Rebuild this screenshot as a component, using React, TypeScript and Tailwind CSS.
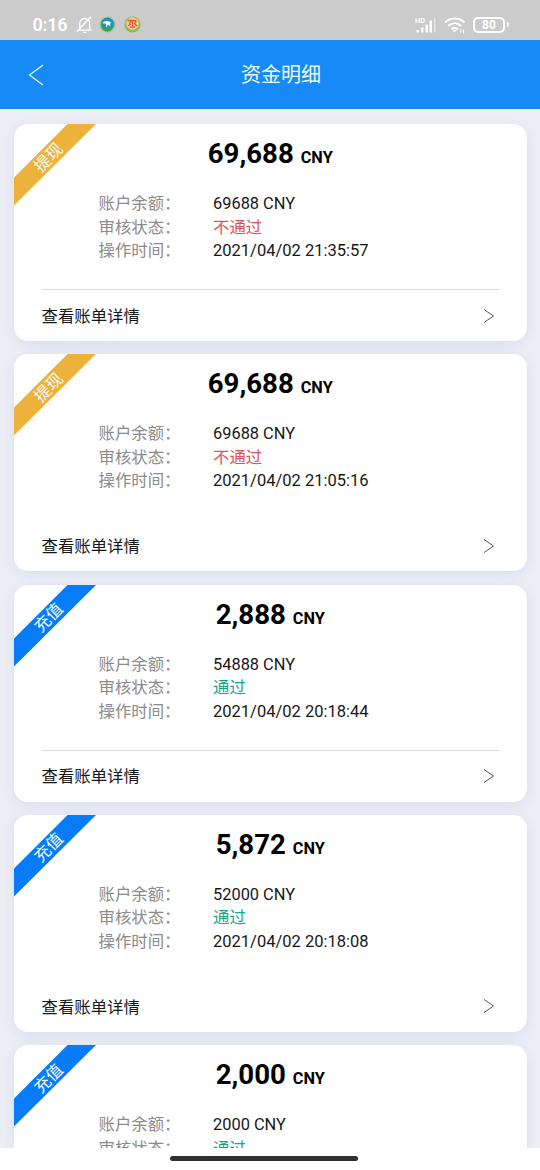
import React from "react";

type Kind = "withdraw" | "deposit";

interface Entry {
  kind: Kind;
  amount: string;
  balance: string;
  time?: string;
  divider: boolean;
}

const entries: Entry[] = [
  { kind: "withdraw", amount: "69,688", balance: "69688 CNY", time: "2021/04/02 21:35:57", divider: true },
  { kind: "withdraw", amount: "69,688", balance: "69688 CNY", time: "2021/04/02 21:05:16", divider: false },
  { kind: "deposit", amount: "2,888", balance: "54888 CNY", time: "2021/04/02 20:18:44", divider: true },
  { kind: "deposit", amount: "5,872", balance: "52000 CNY", time: "2021/04/02 20:18:08", divider: false },
  { kind: "deposit", amount: "2,000", balance: "2000 CNY", divider: false },
];

function StatusBar() {
  return (
    <header className="flex h-10 shrink-0 items-center bg-[#cbcbcb] pt-[9px] pr-[31px] pl-[32.5px] text-white">
      <span className="w-[43.5px] text-[18px] leading-5 font-semibold tracking-[-0.2px]">0:16</span>
      <svg className="h-[18px] w-[18px]" viewBox="0 0 18 18" fill="none" stroke="currentColor" strokeWidth="1.3">
        <path d="M1.500 14.200h14M3.700 14V7.800C3.700 4.500 6 2.500 8.700 2.500S13.700 4.500 13.700 7.800V14M7.300 16.300h3M15 .8 .8 15.500" />
      </svg>
      <svg className="ml-[5px] h-[17px] w-[17px]" viewBox="0 0 17 17">
        <circle cx="8.500" cy="8.500" r="8" fill="#9fce7c" />
        <circle cx="8.500" cy="8.200" r="6.600" fill="#238fc7" />
        <path d="M2 11c2-1 4 1 6 0s3 1 6 0c-1 3-3 4.500-5.500 4.500S3 14 2 11Z" fill="#35a554" />
        <path d="M3.500 7.500c2-3.500 7-3 9-.5l-1.500.5.500 3-2.500-2-2 3 .2-4Z" fill="#fff" />
      </svg>
      <svg className="ml-2 h-[17px] w-[17px]" viewBox="0 0 17 17">
        <circle cx="8.500" cy="8.500" r="8" fill="#8cbd52" />
        <circle cx="8.500" cy="7.500" r="6.200" fill="#f2cf98" />
        <path d="M3.500 4.500h9M5 7.500l2-2M11 4l1 3M4 10l3-2M8.500 5v5M10 7l3 3M6 11h5" stroke="#df5b40" strokeWidth="1.400" fill="none" />
      </svg>
      <svg className="ml-auto h-[18px] w-[22px]" viewBox="0 0 22 18">
        <text x="0" y="6.500" fontSize="7.500" fontWeight="700" fill="#fff" fontFamily="Roboto, sans-serif">HD</text>
        <path d="M1.500 16.500v-2.500h2.500v2.500zM6 16.500v-5h2.500v5zM10.500 16.500V8.500H13v8zM14.500 16.500V4.500h2.500v12z" fill="#fff" />
        <path d="M19 16.500v-14h1.500v14z" fill="#fff" opacity="0.5" />
      </svg>
      <svg className="ml-[7px] h-[18px] w-[22px]" viewBox="0 0 22 18" fill="none" stroke="#fff" strokeWidth="2">
        <path d="M1 6.500c5.500-5.300 14-5.300 19.500 0M4.200 10c4-3.700 9-3.700 13 0M7.500 13.300c2-1.800 4.500-1.800 6.500 0" />
        <path d="M8.500 14 10.800 16.500l2.200-2.500Z" fill="#fff" stroke="none" />
        <path d="M16.800 17v-4M19.500 13.500v4" strokeWidth="1" />
      </svg>
      <div className="ml-[7px] flex items-center gap-[2px]">
        <div className="flex h-[16px] w-[32px] items-center justify-center rounded-[5px] border-2 border-white text-[12px] leading-none font-bold">80</div>
        <div className="h-[5px] w-[2px] rounded-r bg-white" />
      </div>
    </header>
  );
}

function Ribbon({ kind }: { kind: Kind }) {
  const withdraw = kind === "withdraw";
  return (
    <div className="absolute top-0 left-0 h-[82px] w-[82px]">
      <svg className="h-full w-full" viewBox="0 0 82 82">
        <path d="M53.500 0H82L0 81.500V53.500Z" fill={withdraw ? "#ecb23c" : "#087cf8"} />
      </svg>
      <span className="absolute top-[23.5px] left-[14.5px] w-10 -rotate-45 text-center text-[16.4px] leading-5 text-[#f4f8f4]">
        {withdraw ? "提现" : "充值"}
      </span>
    </div>
  );
}

function EntryCard({ entry }: { entry: Entry }) {
  const rejected = entry.kind === "withdraw";
  return (
    <article className="relative flex h-[217px] shrink-0 flex-col overflow-hidden rounded-[14px] bg-white shadow-[0_3px_14px_rgba(90,130,210,0.14)]">
      <Ribbon kind={entry.kind} />
      <h2 className="flex h-[68px] shrink-0 items-baseline justify-center gap-[7px] pt-[11px] text-black">
        <span className="text-[27.6px] leading-[38px] font-bold">{entry.amount}</span>
        <span className="text-[16.3px] font-bold">CNY</span>
      </h2>
      <dl className="grid grid-cols-[114.5px_1fr] pl-[84.5px] text-[16.4px] leading-[23.6px]">
        <dt className="h-[23.6px] text-[#8b8b8b]">账户余额：</dt>
        <dd className="h-[23.6px] text-[#171717]">{entry.balance}</dd>
        <dt className="h-[23.6px] text-[#8b8b8b]">审核状态：</dt>
        <dd className={rejected ? "h-[23.6px] text-[#e45158]" : "h-[23.6px] text-[#16a586]"}>
          {rejected ? "不通过" : "通过"}
        </dd>
        {entry.time && (
          <>
            <dt className="h-[23.6px] text-[#8b8b8b]">操作时间：</dt>
            <dd className="h-[23.6px] text-[16.5px] text-[#171717]">{entry.time}</dd>
          </>
        )}
      </dl>
      {entry.time && (
        <div
          className={
            entry.divider
              ? "mr-7 ml-[27.5px] mt-auto flex h-[52px] shrink-0 items-center justify-between border-t border-[#dcdcdc]"
              : "mr-7 ml-[27.5px] mt-auto flex h-[52px] shrink-0 items-center justify-between border-t border-transparent"
          }
        >
          <span className="pt-[3px] text-[16.4px] text-[#171717]">查看账单详情</span>
          <svg className="mr-1 h-4 w-3" viewBox="0 0 12 16" fill="none" stroke="#555" strokeWidth="1">
            <path d="m1 1.500 9.500 6.500L1 14.500" />
          </svg>
        </div>
      )}
    </article>
  );
}

export default function App() {
  return (
    <div className="flex h-[1170px] w-[540px] flex-col overflow-hidden bg-white font-['Roboto','Noto_Sans_CJK_SC',sans-serif]">
      <StatusBar />
      <nav className="grid h-[69px] shrink-0 grid-cols-[80px_1fr_58px] items-center bg-[#188af8] text-[#ebfbff]">
        <svg className="ml-[28px] h-[22px] w-4" viewBox="0 0 16 22" fill="none" stroke="currentColor" strokeWidth="1.2">
          <path d="M15 1 1.500 11 15 21" />
        </svg>
        <h1 className="text-center text-[20px] leading-7">资金明细</h1>
      </nav>
      <main className="flex min-h-0 flex-1 flex-col gap-[13.3px] overflow-hidden bg-[#edeef5] pr-[13.5px] pl-[14px] pt-[15px]">
        {entries.map((entry, i) => (
          <EntryCard key={i} entry={entry} />
        ))}
      </main>
      <footer className="flex h-[22px] shrink-0 justify-center bg-white pt-2 pr-[13px]">
        <div className="h-[5px] w-[188px] rounded-full bg-[#303030]" />
      </footer>
    </div>
  );
}
